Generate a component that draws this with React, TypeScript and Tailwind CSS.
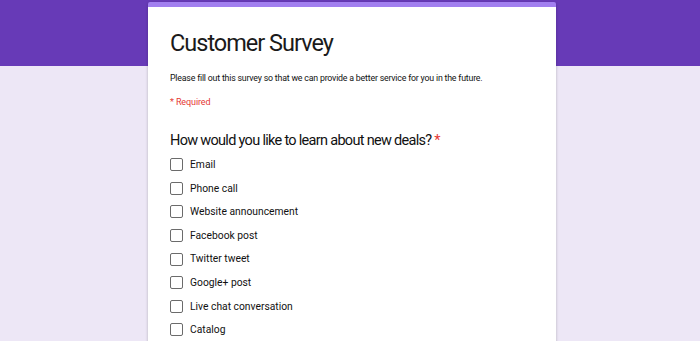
const options = [
  'Email',
  'Phone call',
  'Website announcement',
  'Facebook post',
  'Twitter tweet',
  'Google+ post',
  'Live chat conversation',
  'Catalog',
];

export default function App() {
  return (
    <div
      className="h-[341px] overflow-hidden bg-[linear-gradient(to_bottom,#673ab7_0px,#673ab7_66px,#ede7f6_66px)] pt-[2px] pl-[4px]"
      style={{ fontFamily: 'Roboto, "Liberation Sans", sans-serif' }}
    >
      <div className="mx-auto w-[408px] h-[400px] bg-white border-t-[5px] border-[#a27ff0] shadow-[0_1px_3px_rgba(0,0,0,0.25)] rounded-t-[2px] pl-[22px] pr-6">
        <h1 className="mt-[20px] text-[23.5px] leading-[32px] tracking-[-1px] text-[#1a1a1a]">Customer Survey</h1>
        <p className="mt-[12px] text-[8.8px] leading-[14px] tracking-[-0.2px] text-[#111]">
          Please fill out this survey so that we can provide a better service for you in the future.
        </p>
        <p className="mt-[10px] text-[9px] leading-[14px] tracking-[-0.1px] text-[#e53935]">* Required</p>

        <h2 className="mt-[22px] text-[14.5px] leading-[20px] tracking-[-0.7px] text-[#111]">
          How would you like to learn about new deals? <span className="text-[#e53935]">*</span>
        </h2>

        <ul className="mt-[2px] flex flex-col">
          {options.map((opt) => (
            <li key={opt} className="flex items-center h-[23.6px] gap-[7px]">
              <span className="w-[13px] h-[13px] border-[1.5px] border-[#6b6b6b] rounded-[2px] shrink-0" />
              <span className="text-[10.3px] text-[#111]">{opt}</span>
            </li>
          ))}
        </ul>
      </div>
    </div>
  );
}
